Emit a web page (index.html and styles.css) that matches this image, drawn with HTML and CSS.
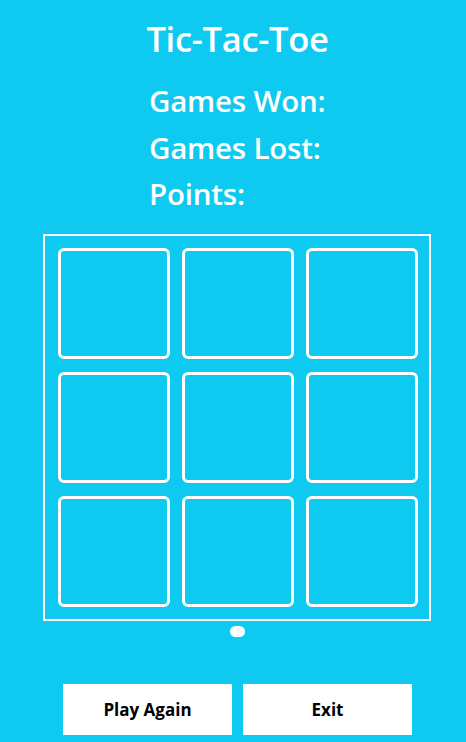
FILE: index.html
```html
<!DOCTYPE html>
<html>
<head>
<meta charset="utf-8">
<link rel="stylesheet" href="styles.css">
</head>
<body>
<div class="page">
  <h1 class="title">Tic-Tac-Toe</h1>
  <div class="stats">
    <div class="stat">Games Won:</div>
    <div class="stat">Games Lost:</div>
    <div class="stat">Points:</div>
  </div>
  <div class="board">
    <div class="cell"></div><div class="cell"></div><div class="cell"></div>
    <div class="cell"></div><div class="cell"></div><div class="cell"></div>
    <div class="cell"></div><div class="cell"></div><div class="cell"></div>
  </div>
  <div class="dot"></div>
  <div class="actions">
    <button class="btn">Play Again</button>
    <button class="btn">Exit</button>
  </div>
</div>
</body>
</html>
```
FILE: styles.css
```css
html, body {
  margin: 0;
  padding: 0;
  background: #0fcaf0;
  height: 100%;
}
.page {
  display: flex;
  flex-direction: column;
  align-items: center;
  font-family: "Open Sans", "Noto Sans", sans-serif;
  color: #fff;
  height: 742px;
  padding-left: 9px;
  box-sizing: border-box;
}
.title {
  margin: 17px 0 0;
  font-size: 34.5px;
  font-weight: 600;
  line-height: 44px;
  letter-spacing: -0.3px;
}
.stats {
  margin-top: 17px;
  display: flex;
  flex-direction: column;
  align-self: flex-start;
  margin-left: 140px;
}
.stat {
  font-size: 29.5px;
  font-weight: 600;
  line-height: 46.5px;
  letter-spacing: -0.2px;
}
.board {
  display: grid;
  grid-template-columns: repeat(3, 112px);
  grid-template-rows: repeat(3, 111px);
  gap: 13px 12px;
  padding: 12px 11px 12px 13px;
  border: 2px solid #fff;
  box-sizing: border-box;
  width: 388px;
  height: 387px;
  align-self: flex-start;
  margin: 16px 0 0 34px;
}
.cell {
  border: 3px solid #fff;
  border-radius: 6px;
}
.dot {
  margin-top: 5px;
  width: 15px;
  height: 11px;
  border-radius: 6px;
  background: #fff;
}
.actions {
  margin-top: 47px;
  display: flex;
  gap: 11px;
}
.btn {
  width: 169px;
  height: 51px;
  border: none;
  background: #fff;
  color: #000;
  font-family: "Open Sans", "Noto Sans", sans-serif;
  font-size: 17px;
  font-weight: 700;
  padding: 0;
}
```
